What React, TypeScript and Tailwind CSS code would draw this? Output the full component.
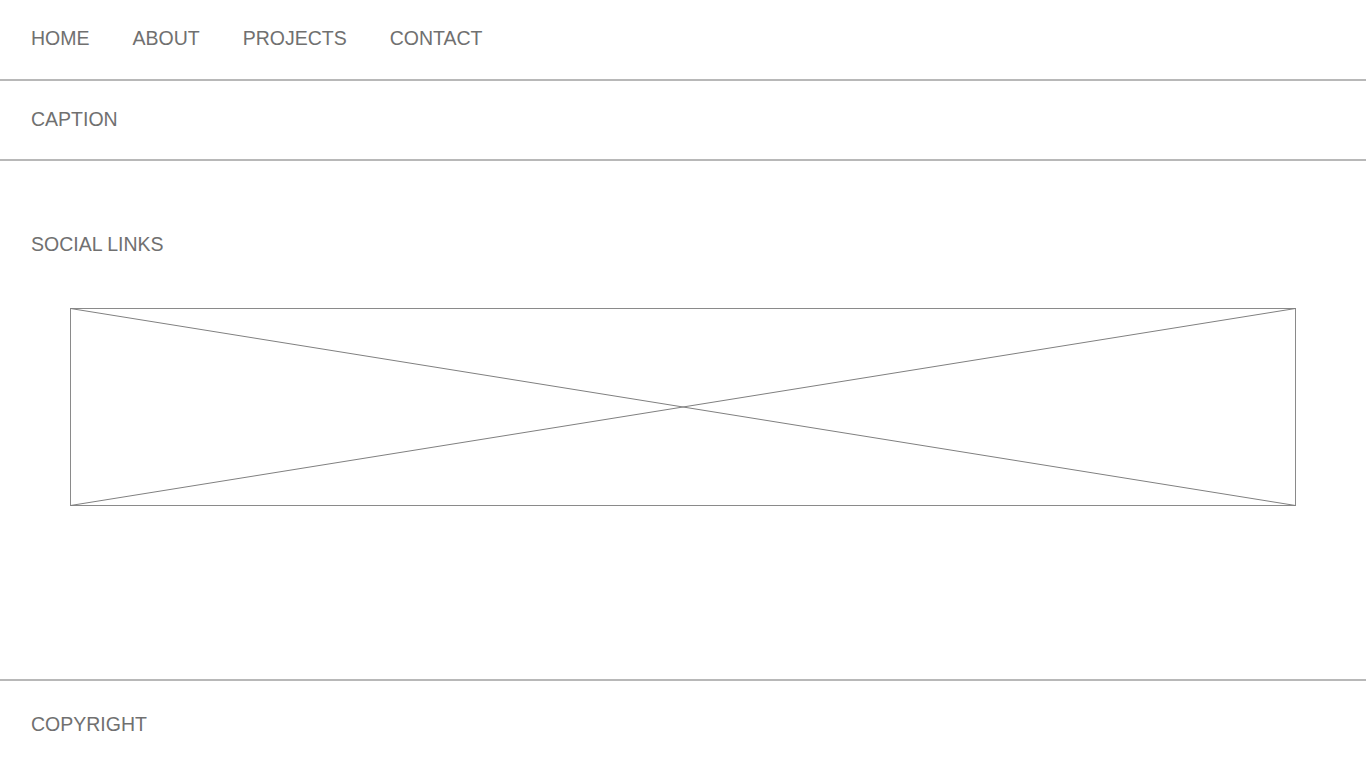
import React from "react";

export default function App() {
  const font = { fontFamily: '"Liberation Sans", Arial, sans-serif' };
  return (
    <div className="w-[1366px] h-[768px] bg-white text-[19.5px] leading-[23px] text-[#707070] overflow-hidden flex flex-col" style={font}>
      <nav className="h-[81px] shrink-0 border-b-2 border-[#b8b8b8] flex items-center gap-[43px] pl-[31px] pb-[2px]">
        <span>HOME</span>
        <span>ABOUT</span>
        <span>PROJECTS</span>
        <span>CONTACT</span>
      </nav>
      <div className="h-[80px] shrink-0 border-b-2 border-[#b8b8b8] flex items-center pl-[31px] pb-[1px]">
        CAPTION
      </div>
      <div className="flex-1 flex flex-col">
        <div className="pl-[31px] pt-[72px]">SOCIAL LINKS</div>
        <div className="ml-[70px] mt-[52px] w-[1226px] h-[198px]">
          <svg width="1226" height="198" viewBox="0 0 1226 198" className="block">
            <rect x="0.5" y="0.5" width="1225" height="197" fill="none" stroke="#8a8a8a" strokeWidth="1" />
            <line x1="0.5" y1="0.5" x2="1225.5" y2="197.5" stroke="#808080" strokeWidth="1" />
            <line x1="0.5" y1="197.5" x2="1225.5" y2="0.5" stroke="#808080" strokeWidth="1" />
          </svg>
        </div>
      </div>
      <footer className="h-[89px] shrink-0 border-t-2 border-[#b8b8b8] flex items-center pl-[31px]">
        COPYRIGHT
      </footer>
    </div>
  );
}
